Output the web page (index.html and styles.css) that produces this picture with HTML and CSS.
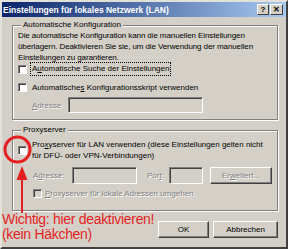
FILE: index.html
```html
<!DOCTYPE html>
<html lang="de">
<head>
    <meta charset="UTF-8">
    <title>Einstellungen für lokales Netzwerk (LAN)</title>
    <link rel="stylesheet" href="styles.css">
</head>
<body>
    <div class="window">
        <div class="titlebar">
            <span class="title">Einstellungen für lokales Netzwerk (LAN)</span>
            <span class="tb-buttons">
                <span class="tb-btn help">?</span>
                <span class="tb-btn close">✕</span>
            </span>
        </div>
        <div class="content">
            <fieldset class="group auto">
                <legend>Automatische Konfiguration</legend>
                <p class="desc">Die automatische Konfiguration kann die manuellen Einstellungen überlagern. Deaktivieren Sie sie, um die Verwendung der manuellen Einstellungen zu garantieren.</p>
                <div class="check row-search">
                    <span class="box"></span>
                    <span class="label focus">A<u>u</u>tomatische Suche der Einstellungen</span>
                </div>
                <div class="check row-script">
                    <span class="box"></span>
                    <span class="label">Automatische<u>s</u> Konfigurationsskript verwenden</span>
                </div>
                <div class="field-row row-addr1">
                    <span class="field-label disabled"><u>A</u>dresse</span>
                    <span class="input wide"></span>
                </div>
            </fieldset>
            <fieldset class="group proxy">
                <legend>Proxyserver</legend>
                <div class="check row-proxy">
                    <span class="box"></span>
                    <span class="label">Pro<u>x</u>yserver für LAN verwenden (diese Einstellungen gelten nicht für DFÜ- oder VPN-Verbindungen)</span>
                </div>
                <div class="field-row row-addr2">
                    <span class="field-label disabled">A<u>d</u>resse:</span>
                    <span class="input addr"></span>
                    <span class="field-label disabled port">Por<u>t</u>:</span>
                    <span class="input portbox"></span>
                    <span class="btn disabled advanced">Er<u>w</u>eitert...</span>
                </div>
                <div class="check row-bypass">
                    <span class="box off"></span>
                    <span class="label disabled"><u>P</u>roxyserver für lokale Adressen umgehen</span>
                </div>
            </fieldset>
            <div class="buttons">
                <span class="btn ok">OK</span>
                <span class="btn cancel">Abbrechen</span>
            </div>
        </div>
    </div>

    <!-- Markierung -->
    <svg class="marker" width="288" height="249" viewBox="0 0 288 249">
        <circle cx="17.5" cy="149.5" r="12.5" fill="none" stroke="#e41f1f" stroke-width="3"/>
        <line x1="22" y1="178" x2="22" y2="213" stroke="#e41f1f" stroke-width="2"/>
        <polygon points="22,166 16.5,180 27.5,180" fill="#e41f1f"/>
    </svg>
    <div class="note">Wichtig: hier deaktivieren!<br>(kein Häkchen)</div>
</body>
</html>
```

FILE: styles.css
```css
* { box-sizing: border-box; }
body { margin: 0; font-family: "Liberation Sans", Arial, sans-serif; font-size: 8px; color: #000; position: relative; width: 288px; height: 249px; overflow: hidden; }
u { text-decoration: underline; text-underline-offset: 1px; }

.window { width: 288px; height: 249px; background: #d4d0c8; border: 2px solid; border-color: #e4e1db #404040 #404040 #e4e1db; }
.titlebar { height: 15px; background: linear-gradient(to right, #0a246a, #a6caf0); display: flex; align-items: center; justify-content: space-between; padding: 0 3px 0 1px; }
.title { color: #fff; font-weight: bold; font-size: 8.5px; letter-spacing: 0; }
.tb-buttons { display: flex; gap: 1px; }
.tb-btn { width: 12px; height: 11px; background: #d4d0c8; border: 1px solid; border-color: #fff #404040 #404040 #fff; display: flex; align-items: center; justify-content: center; font-weight: bold; font-size: 8px; line-height: 1; color: #000; }
.tb-btn.close { width: 13px; font-size: 8px; }

.content { padding: 3px 8px 0 10px; }
.group { margin: 0; border: 1px solid #808080; box-shadow: inset 1px 1px 0 #fff, 1px 1px 0 #fff; padding: 0 4px 6px 5px; }
.group legend { padding: 0 2px; margin-left: 3px; line-height: 10px; background: #d4d0c8; }
.group.proxy { margin-top: 5px; padding-bottom: 11px; }

.desc { margin: 0; line-height: 11px; letter-spacing: -0.1px; }

.check { display: flex; align-items: center; height: 12px; }
.box { width: 9px; height: 9px; flex: none; background: #fff; border: 1px solid; border-color: #808080 #fff #fff #808080; box-shadow: inset 1px 1px 0 #404040; margin-right: 4px; }
.box.off { background: #d4d0c8; }
.label { padding: 0 1px; line-height: 11px; }
.focus { outline: 1px dotted #000; outline-offset: 0; line-height: 12px; }
.row-script { margin-top: 6px; }
.row-proxy { margin-top: 4px; height: auto; align-items: flex-start; }
.row-proxy .box { margin-top: 7px; }
.row-bypass { margin-top: 3px; padding-left: 15px; }
.row-bypass .box { margin-right: 2px; }

.disabled { color: #808080; text-shadow: 1px 1px 0 #fff; }
.field-row { display: flex; align-items: center; }
.row-addr1 { margin-top: 4px; padding-left: 14px; }
.row-addr1 .field-label { width: 36px; }
.row-addr2 { margin-top: 6px; padding-left: 15px; }
.row-addr2 .field-label { width: 39px; }
.row-addr2 .field-label.port { width: 22px; margin-left: 10px; }

.input { height: 16px; background: #d4d0c8; border: 1px solid; border-color: #808080 #fff #fff #808080; box-shadow: inset 1px 1px 0 #404040, inset -1px -1px 0 #d4d0c8; }
.input.wide { width: 135px; }
.input.addr { width: 65px; height: 17px; }
.input.portbox { width: 34px; height: 17px; }

.btn { display: flex; align-items: center; justify-content: center; height: 17px; background: #d4d0c8; border: 1px solid; border-color: #fff #404040 #404040 #fff; box-shadow: inset -1px -1px 0 #808080; }
.btn.advanced { width: 62px; margin-left: 7px; }
.buttons { display: flex; justify-content: flex-end; gap: 4px; margin-top: 10px; }
.btn.ok { width: 51px; }
.btn.cancel { width: 65px; }

.marker { position: absolute; top: 0; left: 0; pointer-events: none; }
.note { position: absolute; left: 2px; top: 212px; color: #e41f1f; font-size: 14px; line-height: 15px; letter-spacing: -0.3px; }
```
